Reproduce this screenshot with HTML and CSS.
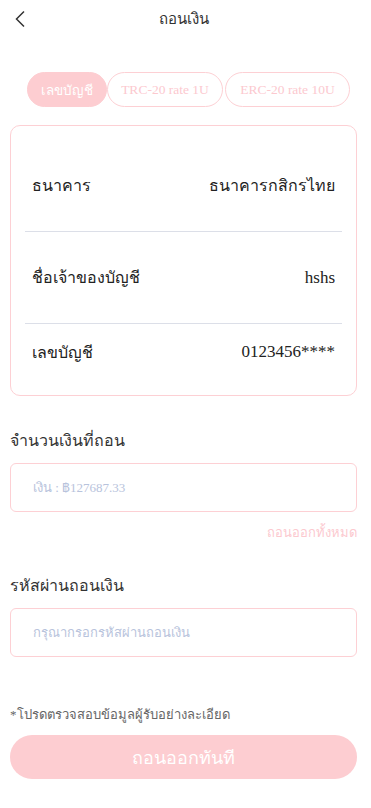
FILE: index.html
```html
<!DOCTYPE html>
<html lang="th">
<head>
<meta charset="utf-8">
<link rel="stylesheet" href="styles.css">
</head>
<body>
<div class="page">
  <header class="topbar">
    <span class="back"><svg width="12" height="18" viewBox="0 0 12 18"><path d="M10 1.5 L2.5 9 L10 16.5" fill="none" stroke="#333" stroke-width="1.5"/></svg></span>
    <h1 class="title">ถอนเงิน</h1>
  </header>

  <nav class="tabs">
    <span class="tab active">เลขบัญชี</span>
    <span class="tab t2">TRC-20 rate 1U</span>
    <span class="tab t3">ERC-20 rate 10U</span>
  </nav>

  <section class="card">
    <div class="row r1"><span>ธนาคาร</span><span>ธนาคารกสิกรไทย</span></div>
    <div class="row r2"><span>ชื่อเจ้าของบัญชี</span><span class="num">hshs</span></div>
    <div class="row r3"><span>เลขบัญชี</span><span class="num">0123456****</span></div>
  </section>

  <h2 class="label l1">จำนวนเงินที่ถอน</h2>
  <div class="input">เงิน : ฿127687.33</div>
  <div class="all">ถอนออกทั้งหมด</div>

  <h2 class="label l2">รหัสผ่านถอนเงิน</h2>
  <div class="input">กรุณากรอกรหัสผ่านถอนเงิน</div>

  <p class="note">*โปรดตรวจสอบข้อมูลผู้รับอย่างละเอียด</p>
  <button class="submit">ถอนออกทันที</button>
</div>
</body>
</html>
```

FILE: styles.css
```css
* { box-sizing: border-box; }
html, body { margin: 0; padding: 0; background: #fff; }
body { font-family: "Liberation Serif", serif; color: #333; }
.page { width: 371px; padding: 0 14px 0 10px; }

.topbar { position: relative; height: 38px; display: flex; align-items: center; justify-content: center; }
.back { position: absolute; left: 4px; top: 10px; }
.title { margin: 0; font-size: 15px; font-weight: normal; color: #333; font-family: "Noto Sans", sans-serif; }

.tabs { display: flex; margin: 34px 0 0 17px; height: 35px; }
.tab { display: flex; align-items: center; justify-content: center; border: 1px solid #fdd0d4; border-radius: 18px; color: #fcc9cf; font-size: 13.5px; font-weight: normal; white-space: nowrap; }
.tab.active { background: #fdcdd1; color: #fff; border-color: #fdcdd1; width: 80px; }
.t2 { width: 116px; }
.t3 { width: 125px; margin-left: 2px; }

.card { margin-top: 18px; border: 1px solid #fdd0d4; border-radius: 10px; padding: 0 14px; height: 271px; display: flex; flex-direction: column; }
.row { display: flex; justify-content: space-between; align-items: center; font-size: 16px; color: #222; padding: 0 7px; }
.row .num { font-size: 17px; }
.r1 { height: 106px; border-bottom: 1px solid #dcdfe8; padding-top: 14px; }
.r2 { height: 92px; border-bottom: 1px solid #dcdfe8; }
.r3 { height: 58px; padding-bottom: 2px; }

.label { margin: 0; font-size: 16px; font-weight: normal; color: #333; line-height: 22px; }
.l1 { margin-top: 34px; }
.l2 { margin-top: 33px; }

.input { margin-top: 11px; height: 49px; border: 1px solid #fdd0d4; border-radius: 6px; display: flex; align-items: center; padding-left: 22px; font-size: 13px; color: #b8c3dc; }
.all { text-align: right; font-size: 13px; color: #fcc9cf; margin-top: 12px; line-height: 18px; }

.note { margin: 49px 0 0; font-size: 13px; color: #666; line-height: 18px; }
.submit { display: block; width: 100%; margin-top: 11px; height: 44px; border: none; border-radius: 22px; background: #fdcdd1; color: #fff; font-size: 18px; font-family: "Liberation Serif", serif; }
```
